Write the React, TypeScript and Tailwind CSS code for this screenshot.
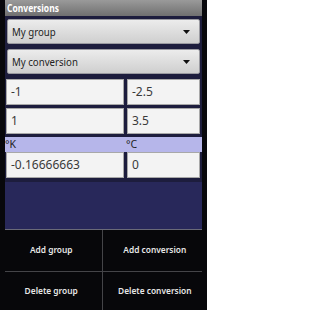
import React from "react";

const font = { fontFamily: '"Noto Sans", "Open Sans", "DejaVu Sans", sans-serif' };

function Spinner({ label }: { label: string }) {
  return (
    <div className="mx-[2px] h-[25px] flex items-center justify-between rounded-[2px] border border-[#9a9aa0] bg-gradient-to-b from-[#ececec] to-[#cfcfcf] pl-[4px] pr-[9px]">
      <span className="inline-block origin-left scale-x-[0.84] text-[11.5px] text-[#222] leading-none whitespace-nowrap">{label}</span>
      <svg width="7" height="4" viewBox="0 0 7 4">
        <polygon points="0,0 7,0 3.5,4" fill="#111" />
      </svg>
    </div>
  );
}

function Field({ value }: { value: string }) {
  return (
    <div className="h-full flex items-center border border-[#a8a8a8] bg-[#f3f3f3] pl-[4px] text-[12px] text-[#3a3a3a] leading-none">
      {value}
    </div>
  );
}

function Row({ a, b }: { a: string; b: string }) {
  return (
    <div className="flex h-[26px] pl-[1px] pr-[2px] gap-[3px]">
      <div className="w-[118px]">
        <Field value={a} />
      </div>
      <div className="flex-1">
        <Field value={b} />
      </div>
    </div>
  );
}

function Btn({ label }: { label: string }) {
  return (
    <div className="flex items-center justify-center">
      <span className="inline-block scale-x-[0.88] text-[9.5px] font-semibold text-[#e6e6e6] whitespace-nowrap">{label}</span>
    </div>
  );
}

export default function App() {
  return (
    <div className="w-[207px] h-[310px] bg-[#08080c] flex flex-col overflow-hidden" style={font}>
      <div className="ml-[5px] w-[197px] h-[230px] bg-[#1d1d3d] flex flex-col border-b border-[#6a6a78]">
        <div className="h-[16px] bg-gradient-to-b from-[#9a9a9a] to-[#707070] flex items-center pl-[2px]">
          <span className="inline-block origin-left scale-x-[0.85] text-[10px] font-bold text-white leading-none">Conversions</span>
        </div>
        <div className="mt-[3px]">
          <Spinner label="My group" />
        </div>
        <div className="mt-[5px]">
          <Spinner label="My conversion" />
        </div>
        <div className="mt-[5px]">
          <Row a="-1" b="-2.5" />
        </div>
        <div className="mt-[3px]">
          <Row a="1" b="3.5" />
        </div>
        <div className="mt-[3px] h-[15px] bg-[#b6b6ea] flex items-center text-[10.5px] text-[#222] leading-none">
          <div className="w-[121px]">°K</div>
          <div>°C</div>
        </div>
        <Row a="-0.16666663" b="0" />
        <div className="flex-1 mt-[4px] bg-[#28285a]" />
      </div>
      <div className="flex-1 grid grid-cols-[102px_1px_1fr] grid-rows-[41px_1px_1fr] bg-[#07070a]">
        <Btn label="Add group" />
        <div className="bg-[#444448]" />
        <Btn label="Add conversion" />
        <div className="bg-[#444448] ml-[5px]" />
        <div className="bg-[#444448]" />
        <div className="bg-[#444448] mr-[5px]" />
        <Btn label="Delete group" />
        <div className="bg-[#444448]" />
        <Btn label="Delete conversion" />
      </div>
    </div>
  );
}
